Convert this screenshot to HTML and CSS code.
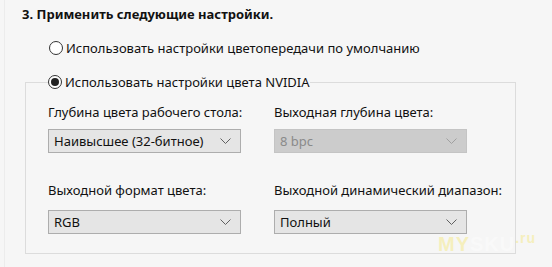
FILE: index.html
```html
<!DOCTYPE html>
<html lang="ru">
  <head>
    <meta charset="UTF-8" />
    <meta name="viewport" content="width=device-width, initial-scale=1.0" />
    <title>Настройки цвета</title>
    <link rel="stylesheet" href="styles.css">
  </head>
  <body>
    <div class="panel">
      <h1 class="step-title">3. Применить следующие настройки.</h1>

      <div class="radio-row">
        <span class="radio"></span>
        <span>Использовать настройки цветопередачи по умолчанию</span>
      </div>

      <fieldset class="group">
        <legend class="radio-row legend">
          <span class="radio checked"></span>
          <span>Использовать настройки цвета NVIDIA</span>
        </legend>

        <div class="fields">
          <div class="field">
            <div class="field-label">Глубина цвета рабочего стола:</div>
            <div class="select">
              <span>Наивысшее (32-битное)</span>
              <svg class="chevron" width="11" height="6" viewBox="0 0 11 6"><path d="M0.5 0.5 L5.5 5.5 L10.5 0.5" /></svg>
            </div>
          </div>
          <div class="field">
            <div class="field-label">Выходная глубина цвета:</div>
            <div class="select disabled">
              <span>8 bpc</span>
              <svg class="chevron" width="11" height="6" viewBox="0 0 11 6"><path d="M0.5 0.5 L5.5 5.5 L10.5 0.5" /></svg>
            </div>
          </div>
          <div class="field">
            <div class="field-label second">Выходной формат цвета:</div>
            <div class="select">
              <span>RGB</span>
              <svg class="chevron" width="11" height="6" viewBox="0 0 11 6"><path d="M0.5 0.5 L5.5 5.5 L10.5 0.5" /></svg>
            </div>
          </div>
          <div class="field">
            <div class="field-label second">Выходной динамический диапазон:</div>
            <div class="select">
              <span>Полный</span>
              <svg class="chevron" width="11" height="6" viewBox="0 0 11 6"><path d="M0.5 0.5 L5.5 5.5 L10.5 0.5" /></svg>
            </div>
          </div>
        </div>
      </fieldset>

      <div class="watermark"><span class="wm-my">MY</span><span class="wm-sku">SKU</span><span class="wm-ru">.ru</span></div>
    </div>
  </body>
</html>
```

FILE: styles.css
```css
body {
  margin: 0;
  background: #f6f6f6;
  font-family: "Noto Sans", "Open Sans", sans-serif;
  font-size: 13px;
  color: #111;
}
.panel {
  position: relative;
  height: 267px;
  padding: 5px 0 0 17px;
  box-sizing: border-box;
  border-left: 1px solid #ececec;
  margin-left: 4px;
}
.step-title {
  margin: 0;
  font-size: 13px;
  font-weight: bold;
  line-height: 18px;
  color: #111;
}
.radio-row {
  display: flex;
  align-items: center;
  gap: 3px;
  height: 18px;
  margin: 16px 0 0 27px;
}
.radio {
  width: 14px;
  height: 14px;
  border: 1px solid #333;
  border-radius: 50%;
  background: #fff;
  box-sizing: border-box;
  display: flex;
  align-items: center;
  justify-content: center;
}
.radio.checked::after {
  content: "";
  width: 8px;
  height: 8px;
  border-radius: 50%;
  background: #222;
}
.group {
  width: 491px;
  margin: 16px 0 0 3px;
  padding: 12px 0 19px 22px;
  border: 1px solid #dcdcdc;
  box-sizing: border-box;
  min-width: 0;
}
.legend {
  margin: 0;
  padding: 0;
}
.fields {
  display: grid;
  grid-template-columns: 193px 193px;
  column-gap: 33px;
  row-gap: 28px;
}
.field-label {
  line-height: 18px;
  margin-bottom: 8px;
  white-space: nowrap;
}
.field-label.second {
  margin-bottom: 11px;
}
.select {
  height: 24px;
  border: 1px solid #adadad;
  background: #e5e5e5;
  box-sizing: border-box;
  display: flex;
  align-items: center;
  justify-content: space-between;
  padding: 0 9px 0 5px;
}
.select.disabled {
  background: #cccccc;
  border-color: #c4c4c4;
  color: #8a8a8a;
}
.chevron path {
  fill: none;
  stroke: #606060;
  stroke-width: 1;
}
.select.disabled .chevron path {
  stroke: #a0a0a0;
}
.watermark {
  position: absolute;
  left: 433px;
  top: 233px;
  font-family: "Liberation Sans", sans-serif;
  font-weight: bold;
  font-size: 20px;
  letter-spacing: 1px;
  opacity: 0.4;
}
.wm-my {
  color: #f5e66a;
}
.wm-sku {
  color: #ffffff;
}
.wm-ru {
  color: #f5e66a;
  font-size: 14px;
  position: relative;
  top: -8px;
}
```
